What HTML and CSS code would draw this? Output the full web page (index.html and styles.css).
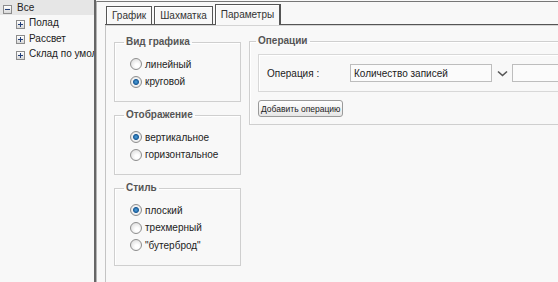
FILE: index.html
```html
<!DOCTYPE html>
<html lang="ru">
<head>
    <meta charset="UTF-8">
    <title>Параметры</title>
    <link rel="stylesheet" href="styles.css">
</head>
<body>
    <div class="app">
        <div class="tree">
            <div class="node root"><span class="toggle minus"></span>Все</div>
            <div class="node child"><span class="toggle plus"></span>Полад</div>
            <div class="node child"><span class="toggle plus"></span>Рассвет</div>
            <div class="node child"><span class="toggle plus"></span>Склад по умолч</div>
        </div>
        <div class="main">
            <div class="tabs">
                <div class="tab">График</div>
                <div class="tab">Шахматка</div>
                <div class="tab active">Параметры</div>
            </div>
            <div class="panel">
                <div class="col-left">
                    <fieldset class="group">
                        <legend>Вид графика</legend>
                        <label class="opt"><input type="radio" name="kind"> линейный</label>
                        <label class="opt"><input type="radio" name="kind" checked> круговой</label>
                    </fieldset>
                    <fieldset class="group">
                        <legend>Отображение</legend>
                        <label class="opt"><input type="radio" name="orient" checked> вертикальное</label>
                        <label class="opt"><input type="radio" name="orient"> горизонтальное</label>
                    </fieldset>
                    <fieldset class="group">
                        <legend>Стиль</legend>
                        <label class="opt"><input type="radio" name="style" checked> плоский</label>
                        <label class="opt"><input type="radio" name="style"> трехмерный</label>
                        <label class="opt"><input type="radio" name="style"> "бутерброд"</label>
                    </fieldset>
                </div>
                <fieldset class="group ops">
                    <legend>Операции</legend>
                    <div class="op-row">
                        <span class="op-label">Операция :</span>
                        <input class="field" type="text" value="Количество записей" readonly>
                        <svg class="chevron" width="11" height="7" viewBox="0 0 11 7">
                            <path d="M1 1.5 L5.5 5.5 L10 1.5" fill="none" stroke="#555" stroke-width="1.6"/>
                        </svg>
                        <input class="field" type="text" readonly>
                    </div>
                    <button class="btn" type="button">Добавить операцию</button>
                </fieldset>
            </div>
        </div>
    </div>
</body>
</html>
```

FILE: styles.css
```css
body {
    margin: 0;
    width: 558px;
    height: 282px;
    overflow: hidden;
    background: #f8f8f8;
    font-family: "Liberation Sans", Arial, sans-serif;
    font-size: 10px;
    color: #222;
}

.app {
    display: flex;
    height: 100%;
}

/* tree on the left */
.tree {
    width: 94px;
    flex: none;
    overflow: hidden;
    white-space: nowrap;
    border-right: 2px solid #666;
    background: #f8f8f8;
}

.node {
    display: flex;
    align-items: center;
    height: 15px;
}

.node.root {
    height: 15px;
    padding-left: 3px;
    background: #e6e6e6;
}

.node.child {
    height: 15.5px;
    padding-left: 16px;
}

.toggle {
    position: relative;
    width: 7px;
    height: 7px;
    margin-right: 4px;
    margin-top: 3px;
    border: 1px solid #8c8c8c;
    background: linear-gradient(#ffffff, #d8d8d8);
    flex: none;
}

.node.root .toggle {
    margin-right: 5px;
}

.toggle::before,
.toggle::after {
    content: "";
    position: absolute;
    background: #23407a;
}

.toggle::before {
    left: 1px;
    top: 3px;
    width: 5px;
    height: 1px;
}

.toggle.plus::after {
    left: 3px;
    top: 1px;
    width: 1px;
    height: 5px;
}

/* right part with tabs */
.main {
    flex: 1;
    min-width: 0;
    border-left: 1px solid #b4b4b4;
    border-top: 1px solid #777;
    margin-top: 1px;
    padding-left: 8px;
    display: flex;
    flex-direction: column;
}

.tabs {
    display: flex;
    align-items: flex-end;
    gap: 2px;
    height: 22px;
    padding-left: 1px;
    border-bottom: 1px solid #555;
    box-shadow: 0 1px 0 #d4d4d4;
}

.tab {
    height: 17px;
    line-height: 17px;
    padding: 0 5px;
    border: 1px solid #555;
    border-bottom: none;
    box-shadow: inset 1px 1px 0 #fff;
    background: #f8f8f8;
    color: #333;
}

.tab.active {
    height: 20px;
    line-height: 20px;
    margin-bottom: -1px;
    border-right-width: 2px;
    position: relative;
}

.panel {
    flex: 1;
    display: flex;
    gap: 8px;
    padding: 11px 0 0 8px;
    border-left: 1px solid #c4c4c4;
}

.col-left {
    width: 127px;
    flex: none;
    display: flex;
    flex-direction: column;
    gap: 7px;
}

.group {
    margin: 0;
    padding: 7.25px 0 10.75px 15px;
    border: 1px solid #cfcfcf;
    box-shadow: inset 1px 1px 0 #fff;
}

.group legend {
    margin-left: -6px;
    padding: 0 2px;
    line-height: 12px;
    font-weight: bold;
    color: #555;
}

.opt {
    display: flex;
    align-items: center;
    height: 17.5px;
}

.opt input {
    appearance: none;
    width: 12px;
    height: 12px;
    margin: 0 3px 0 0;
    border: 1px solid #8e8e8e;
    border-radius: 50%;
    background: radial-gradient(circle at 60% 65%, #ffffff 20%, #d4d4d4 100%);
}

.opt input:checked {
    background: radial-gradient(circle, #4fa4e0 0, #1b5c98 2.5px, #f4f4f4 3.5px, #d4d4d4 100%);
}

/* operations block */
.ops {
    width: 400px;
    flex: none;
    align-self: flex-start;
    margin-top: -1px;
    padding: 7px 0 7px 8px;
}

.ops legend {
    margin-left: -2px;
}

.op-row {
    display: flex;
    align-items: center;
    height: 36px;
    padding-left: 8px;
    border: 1px solid #d8d8d8;
    box-shadow: inset 1px 1px 0 #fff;
}

.op-label {
    width: 83px;
    flex: none;
}

.field {
    width: 142px;
    height: 18px;
    box-sizing: border-box;
    margin: 0;
    padding: 0 3px;
    border: 1px solid #bdbdbd;
    background: #fbfbfb;
    font: inherit;
    color: #222;
}

.chevron {
    margin: 0 4px 0 5px;
}

.btn {
    margin-top: 8px;
    height: 17px;
    padding: 0 2px;
    border: 1px solid #9a9a9a;
    border-radius: 3px;
    background: linear-gradient(#ffffff, #e6e6e6);
    font-family: inherit;
    font-size: 8.5px;
    color: #222;
}
```
